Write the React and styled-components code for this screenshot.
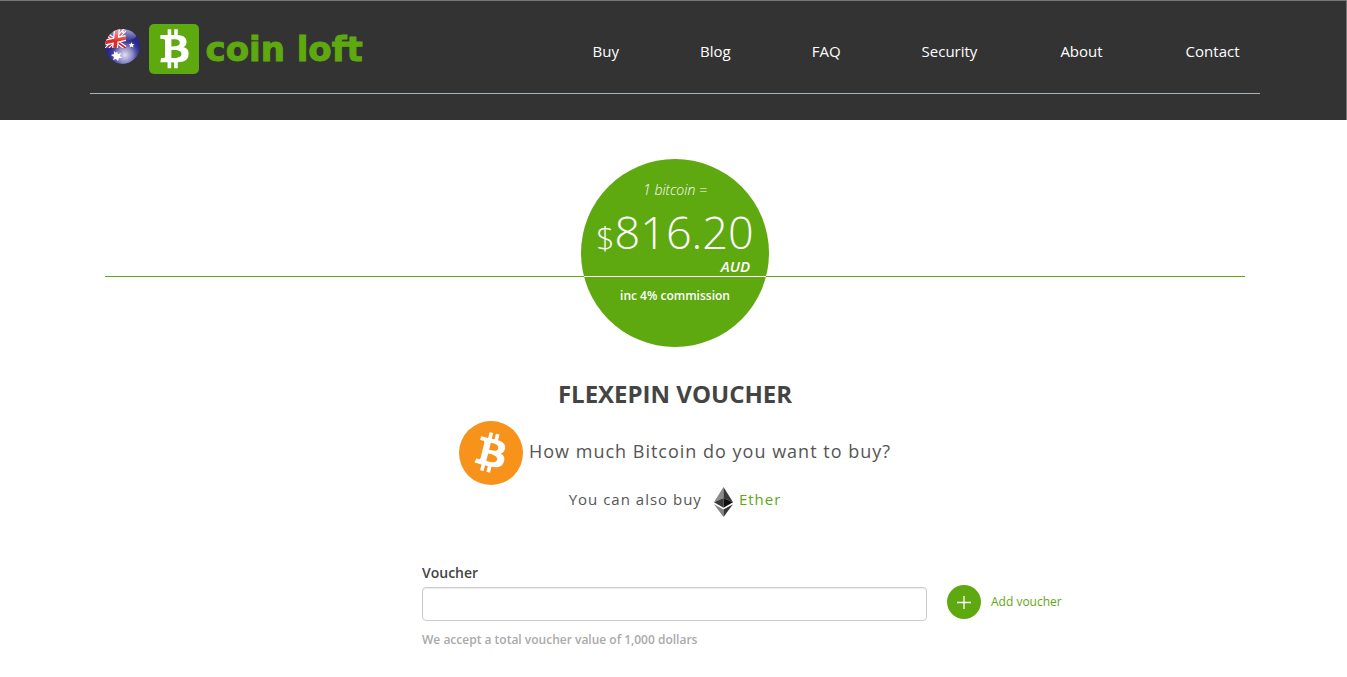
import { useId } from "react";
import styled, { createGlobalStyle } from "styled-components";

const green = "#5ea810";

const GlobalStyle = createGlobalStyle`
  *, *::before, *::after {
    box-sizing: border-box;
  }
  body {
    margin: 0;
    background: #fff;
    color: #444;
    font-family: "Open Sans", "Noto Sans", sans-serif;
    font-size: 14px;
    line-height: 20px;
  }
  a {
    color: ${green};
    text-decoration: none;
  }
`;

const Header = styled.header`
  height: 120px;
  padding-left: 3px;
  background: #333;
  border-top: 1px solid #777;
  border-right: 1px solid #777;
`;

const HeaderInner = styled.div`
  display: flex;
  align-items: flex-start;
  justify-content: space-between;
  max-width: 1170px;
  height: 93px;
  margin: 0 auto;
  padding: 23px 20px 0 15px;
  border-bottom: 1px solid #a9b4bb;
`;

const Brand = styled.a`
  display: flex;
  align-items: flex-start;
`;

const Flag = styled.svg`
  width: 35px;
  height: 35px;
  margin: 5px 9px 0 0;
`;

const BrandMark = styled.span`
  display: grid;
  place-items: center;
  width: 50px;
  height: 50px;
  margin-right: 7px;
  border-radius: 5px;
  background: ${green};
`;

const BrandName = styled.span`
  font-family: "DejaVu Sans", sans-serif;
  font-size: 34px;
  font-weight: 700;
  line-height: 50px;
  -webkit-text-stroke: 1px ${green};
`;

const Nav = styled.nav`
  padding-top: 17px;
`;

const NavList = styled.ul`
  display: flex;
  gap: 81px;
  margin: 0;
  padding: 0;
  list-style: none;

  li:nth-child(n + 5) {
    padding-left: 2px;
  }
`;

const NavLink = styled.a`
  color: #fff;
  font-size: 15px;
`;

const Main = styled.main`
  max-width: 1173px;
  margin: 0 auto;
  padding: 39px 15px 0 18px;
`;

const Rate = styled.section`
  position: relative;
  display: flex;
  justify-content: center;

  &::before {
    content: "";
    position: absolute;
    top: 117px;
    left: 0;
    right: 0;
    height: 1px;
    background: ${green};
  }
`;

const RateCircle = styled.div`
  position: relative;
  width: 188px;
  height: 188px;
  overflow: hidden;
  border-radius: 50%;
  background: ${green};
  color: #fff;
  text-align: center;
`;

const RateTop = styled.div`
  height: 118px;
  padding-top: 21px;
  border-bottom: 1px solid #fff;
`;

const RateLabel = styled.div`
  margin-bottom: 7px;
  font-size: 14px;
  font-style: italic;
  font-weight: 300;
`;

const Price = styled.div`
  font-size: 45px;
  font-weight: 300;
  line-height: 50px;

  small {
    font-size: 32px;
  }
`;

const Currency = styled.div`
  padding-right: 19px;
  font-size: 15px;
  font-style: italic;
  font-weight: 600;
  line-height: 8px;
  text-align: right;
`;

const Commission = styled.div`
  padding-top: 9px;
  font-size: 12px;
  font-weight: 600;
`;

const Title = styled.h1`
  margin: 32px 0 12px;
  font-size: 24px;
  font-weight: 700;
  line-height: 30px;
  text-align: center;
  text-transform: uppercase;
`;

const Question = styled.h2`
  display: flex;
  align-items: center;
  justify-content: center;
  gap: 6px;
  margin: 0;
  color: #555;
  font-size: 18px;
  font-weight: 400;
  letter-spacing: 1px;

  span {
    padding-bottom: 4px;
  }
`;

const Alternative = styled.p`
  display: flex;
  align-items: flex-start;
  justify-content: center;
  gap: 6px;
  margin: 0;
  padding-top: 4px;
  color: #555;
  font-size: 15px;
  letter-spacing: 1px;

  svg {
    margin: -2px 0 0 6px;
  }
`;

const Form = styled.form`
  display: grid;
  grid-template-columns: minmax(0, 505px) auto;
  justify-content: start;
  align-items: center;
  column-gap: 20px;
  margin-top: 46px;
  padding-left: 317px;
`;

const Label = styled.label`
  grid-column: 1 / -1;
  padding-bottom: 2px;
  font-weight: 600;
`;

const Input = styled.input`
  width: 100%;
  height: 34px;
  padding: 6px 12px;
  border: 1px solid #ccc;
  border-radius: 4px;
  box-shadow: inset 0 1px 1px rgba(0, 0, 0, 0.08);
  font: inherit;
`;

const AddButton = styled.button`
  display: flex;
  align-items: center;
  gap: 10px;
  margin-bottom: 4px;
  padding: 0;
  border: 0;
  background: none;
  color: ${green};
  font: inherit;
  font-size: 12px;
  cursor: pointer;
`;

const Help = styled.p`
  grid-column: 1 / -1;
  margin: 7px 0 0;
  color: #aaa;
  font-size: 12px;
  font-weight: 600;
`;

const bitcoinSign =
  "M17.288 10.291c.24-1.59-.974-2.45-2.64-3.03l.54-2.153-1.315-.33-.525 2.107c-.345-.087-.705-.167-1.064-.25l.526-2.127-1.32-.33-.54 2.165c-.285-.067-.565-.132-.84-.2l-1.815-.45-.35 1.407s.975.225.955.236c.535.136.63.486.615.766l-1.477 5.92c-.075.166-.24.406-.614.314.015.02-.96-.24-.96-.24l-.66 1.51 1.71.426.93.242-.54 2.19 1.32.327.54-2.17c.36.1.705.19 1.05.273l-.51 2.154 1.32.33.545-2.19c2.24.427 3.93.257 4.64-1.774.57-1.637-.03-2.58-1.217-3.196.854-.193 1.5-.76 1.68-1.93h.01zm-3.01 4.22c-.404 1.64-3.157.75-4.05.53l.72-2.9c.896.23 3.757.67 3.33 2.37zm.41-4.24c-.37 1.49-2.662.735-3.405.55l.654-2.64c.744.18 3.137.524 2.75 2.084v.006z";

function BitcoinUpright() {
  return (
    <svg width="50" height="50" viewBox="2.6 2.6 18.8 18.8" aria-hidden="true">
      <path d={bitcoinSign} fill="#fff" transform="rotate(-14 12 12)" />
    </svg>
  );
}

function BitcoinCoin() {
  return (
    <svg width="64" height="64" viewBox="0 0 24 24" aria-hidden="true">
      <circle cx="12" cy="12" r="12" fill="#f7931a" />
      <path d={bitcoinSign} fill="#fff" />
    </svg>
  );
}

function EtherIcon() {
  return (
    <svg width="19" height="30" viewBox="0 0 19 30" aria-hidden="true">
      <path d="M9.5 0 0 15.3l9.5-4.2z" fill="#8a8a8a" />
      <path d="M9.5 0 19 15.3l-9.5-4.2z" fill="#383838" />
      <path d="M0 15.3l9.5-4.2v9.6z" fill="#3a3a3a" />
      <path d="M19 15.3l-9.5-4.2v9.6z" fill="#111" />
      <path d="M0 17.2l9.5 5.4V30z" fill="#858585" />
      <path d="M19 17.2l-9.5 5.4V30z" fill="#353535" />
    </svg>
  );
}

function AustraliaFlag() {
  const id = useId();
  return (
    <Flag viewBox="0 0 35 35" role="img" aria-label="Australia">
      <defs>
        <clipPath id={`${id}ball`}>
          <circle cx="17.5" cy="17.5" r="17.5" />
        </clipPath>
        <clipPath id={`${id}canton`}>
          <path d="M0 0h21v19H0z" />
        </clipPath>
        <radialGradient id={`${id}glow`} cx="0.57" cy="0.74" r="0.5">
          <stop offset="0" stopColor="#e4e1f4" />
          <stop offset="0.45" stopColor="#9d99cd" stopOpacity="0.85" />
          <stop offset="1" stopColor="#34349b" stopOpacity="0" />
        </radialGradient>
        <linearGradient id={`${id}gloss`} x1="0" y1="0" x2="0" y2="1">
          <stop offset="0" stopColor="#fff" stopOpacity="0.6" />
          <stop offset="1" stopColor="#fff" stopOpacity="0.05" />
        </linearGradient>
      </defs>
      <g clipPath={`url(#${id}ball)`}>
        <path d="M0 0h35v35H0z" fill="#28288c" />
        <circle cx="17.5" cy="17.5" r="17.5" fill={`url(#${id}glow)`} />
        <g clipPath={`url(#${id}canton)`}>
          <path d="M0 4L22 20M0 21L20 1" stroke="#fff" strokeWidth="4" />
          <path d="M0 4L22 20M0 21L20 1" stroke="#d3222a" strokeWidth="1.8" />
          <path d="M12 0L10 19M0 13.5L21 9" stroke="#fff" strokeWidth="6" />
          <path d="M12 0L10 19M0 13.5L21 9" stroke="#e02a25" strokeWidth="3.6" />
        </g>
        <ellipse cx="17.5" cy="6" rx="14" ry="6" fill={`url(#${id}gloss)`} />
        <path
          d="M12 22l1 3 3-1-1 3 2 2-3 0-1 3-2-2-3 1 1-3-3-2 3-1 0-3 2 2z"
          fill="#fff"
        />
        <path
          d="M26.5 13l.8 2 2.2.2-1.6 1.4.5 2-1.9-1.1-1.9 1.1.5-2-1.6-1.4 2.2-.2z"
          fill="#fff"
        />
        <circle cx="18" cy="3" r="1" fill="#fff" />
      </g>
    </Flag>
  );
}

function PlusIcon() {
  return (
    <svg width="34" height="34" viewBox="0 0 34 34" aria-hidden="true">
      <circle cx="17" cy="17" r="17" fill={green} />
      <path d="M10 17.5h14M17 11v13" stroke="#fff" strokeWidth="1.3" />
    </svg>
  );
}

const links = ["Buy", "Blog", "FAQ", "Security", "About", "Contact"];

export default function App() {
  return (
    <>
      <GlobalStyle />
      <Header>
        <HeaderInner>
          <Brand href="#">
            <AustraliaFlag />
            <BrandMark>
              <BitcoinUpright />
            </BrandMark>
            <BrandName>coin loft</BrandName>
          </Brand>
          <Nav>
            <NavList>
              {links.map((link) => (
                <li key={link}>
                  <NavLink href={`#${link.toLowerCase()}`}>{link}</NavLink>
                </li>
              ))}
            </NavList>
          </Nav>
        </HeaderInner>
      </Header>
      <Main>
        <Rate>
          <RateCircle>
            <RateTop>
              <RateLabel>1 bitcoin =</RateLabel>
              <Price>
                <small>$</small>816.20
              </Price>
              <Currency>AUD</Currency>
            </RateTop>
            <Commission>inc 4% commission</Commission>
          </RateCircle>
        </Rate>
        <Title>Flexepin voucher</Title>
        <Question>
          <BitcoinCoin />
          <span>How much Bitcoin do you want to buy?</span>
        </Question>
        <Alternative>
          You can also buy
          <EtherIcon />
          <a href="#ether">Ether</a>
        </Alternative>
        <Form onSubmit={(e) => e.preventDefault()}>
          <Label htmlFor="voucher">Voucher</Label>
          <Input id="voucher" type="text" aria-describedby="voucher-help" />
          <AddButton type="button">
            <PlusIcon />
            Add voucher
          </AddButton>
          <Help id="voucher-help">
            We accept a total voucher value of 1,000 dollars
          </Help>
        </Form>
      </Main>
    </>
  );
}
